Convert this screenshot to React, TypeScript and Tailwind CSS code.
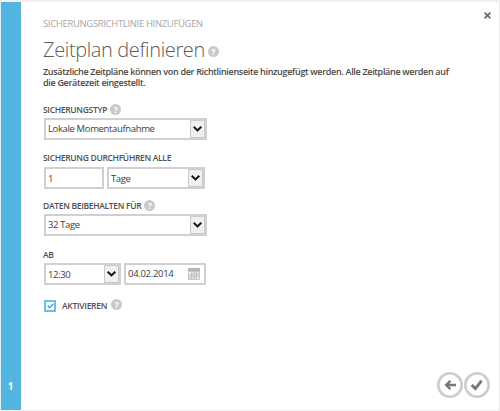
import type { ReactNode } from "react";

function Help({ className = "" }: { className?: string }) {
  return (
    <span
      className={`flex size-[11px] shrink-0 items-center justify-center rounded-full bg-[#c9c9c9] text-[9px] leading-none font-bold tracking-normal text-white ${className}`}
    >
      ?
    </span>
  );
}

function Label({ children, help }: { children: ReactNode; help?: boolean }) {
  return (
    <div className="flex h-[12px] items-center gap-[3px] text-[8.5px] font-semibold tracking-[-0.31px] whitespace-nowrap text-[#505050]">
      {children}
      {help && <Help className="mb-px" />}
    </div>
  );
}

function Select({ value, width, textClass = "" }: { value: string; width: string; textClass?: string }) {
  return (
    <div className={`flex h-[22px] items-center justify-between border-2 border-[#d0d0d0] bg-white pl-[2px] text-[9.5px] text-[#3c3c3c] ${width}`}>
      <span className={`tracking-[-0.36px] whitespace-nowrap ${textClass}`}>{value}</span>
      <span className="flex h-[18px] w-[15px] items-center justify-center border border-[#cacaca] bg-[#f0f0f0]">
        <svg width="9" height="6" viewBox="0 0 9 6" fill="none">
          <path d="M.7 .8 4.5 4.4 8.3 .8" stroke="#111" strokeWidth="2" />
        </svg>
      </span>
    </div>
  );
}

function CalendarIcon() {
  return (
    <svg width="12" height="12" viewBox="0 0 12 12">
      <path d="M0 0h12v12H0z" fill="#c8c8c8" />
      <path d="M0 0h12v3H0z" fill="#b6b6b6" />
      <path d="M4 4h2v2H4zM7 4h1v2H7zM9 4h2v2H9zM1 7h2v1H1zM4 7h2v1H4zM7 7h1v1H7zM9 7h2v1H9zM1 9h2v2H1zM4 9h2v2H4zM7 9h1v2H7z" fill="#dedede" />
      <path d="M1 4h2v2H1zM9 9h2v2H9z" fill="#f6f6f6" />
    </svg>
  );
}

export default function App() {
  return (
    <div className="flex h-[411px] w-[500px] overflow-hidden border-t-2 border-r border-b border-l border-t-[#f1f1f1] border-r-[#e9e9e9] border-b-[#f0f0f0] border-l-[#e4eef3] bg-white font-['Open_Sans','Noto_Sans',sans-serif]">
      <aside className="flex w-[20px] shrink-0 items-end justify-center bg-[#52b5e0] pr-px pb-[18px]">
        <span className="text-[10px] leading-[12px] font-bold text-white">1</span>
      </aside>
      <main className="relative flex grow flex-col pt-[15px] pl-[22px]">
        <button className="absolute top-[10px] right-[8px]" aria-label="Schließen">
          <svg width="7" height="7" viewBox="0 0 7 7">
            <path d="M.6 .6l5.8 5.8M6.4 .6L.6 6.4" stroke="#666" strokeWidth="1.6" />
          </svg>
        </button>
        <div className="h-[14px] text-[9.5px] leading-[14px] tracking-[-0.34px] whitespace-nowrap text-[#a8a8a8]">SICHERUNGSRICHTLINIE HINZUFÜGEN</div>
        <div className="mt-[4px] flex h-[30px] items-center gap-[3px] whitespace-nowrap text-[#5c5c5c]">
          <h1 className="text-[20px] leading-[30px] font-light tracking-[-0.38px]">Zeitplan definieren</h1>
          <Help className="mt-[3px]" />
        </div>
        <p className="mt-px text-[9px] leading-[11px] font-semibold tracking-[-0.315px] whitespace-nowrap text-[#484848]">
          Zusätzliche Zeitpläne können von der Richtlinienseite hinzugefügt werden. Alle Zeitpläne werden auf
          <br />
          die Gerätezeit eingestellt.
        </p>
        <div className="mt-[16px]">
          <Label help>SICHERUNGSTYP</Label>
          <div className="mt-[2px] ml-px">
            <Select value="Lokale Momentaufnahme" width="w-[163px]" />
          </div>
        </div>
        <div className="mt-[12px]">
          <Label>SICHERUNG DURCHFÜHREN ALLE</Label>
          <div className="mt-[3px] ml-px flex gap-[3px]">
            <div className="flex h-[22px] w-[60px] items-center border-2 border-[#d0d0d0] pt-[2px] pl-[2px] text-[9.5px] text-[#3c3c3c]">1</div>
            <Select value="Tage" width="w-[98px]" textClass="mt-[2px]" />
          </div>
        </div>
        <div className="mt-[11px]">
          <Label help>DATEN BEIBEHALTEN FÜR</Label>
          <div className="mt-[2px] ml-px">
            <Select value="32 Tage" width="w-[163px]" />
          </div>
        </div>
        <div className="mt-[13px]">
          <Label>AB</Label>
          <div className="mt-[2px] ml-px flex gap-[3px]">
            <Select value="12:30" width="w-[77px]" textClass="mt-[3px]" />
            <div className="flex h-[22px] w-[82px] items-center justify-between border-2 border-[#d0d0d0] pr-[4px] pl-[2px] text-[9.5px] tracking-[-0.3px] text-[#3c3c3c]">
              04.02.2014
              <CalendarIcon />
            </div>
          </div>
        </div>
        <div className="mt-[13px] ml-px flex h-[16px] items-center text-[8.5px] font-semibold tracking-[-0.28px] text-[#505050]">
          <span className="flex size-[12px] items-center justify-center border-2 border-[#74bce0] bg-[#f4fafd]">
            <svg width="7" height="6" viewBox="0 0 7 6" fill="none">
              <path d="M.7 2.8 2.6 4.7 6.3 .8" stroke="#348abc" strokeWidth="1.2" />
            </svg>
          </span>
          <span className="ml-[6px]">AKTIVIEREN</span>
          <Help className="mb-[4px] ml-[4px]" />
        </div>
        <div className="mt-auto mr-[9px] mb-[12px] flex justify-end gap-[1px]">
          <svg width="26" height="26" viewBox="0 0 26 26" fill="none">
            <circle cx="13" cy="13" r="11.7" stroke="#cdcdcd" strokeWidth="2.6" />
            <path d="M19 13H9.5M13.4 8.8 9.2 13l4.2 4.2" stroke="#777" strokeWidth="2.4" />
          </svg>
          <svg width="26" height="26" viewBox="0 0 26 26" fill="none">
            <circle cx="13" cy="13" r="11.7" stroke="#cdcdcd" strokeWidth="2.6" />
            <path d="M7.7 13 11.4 16.6 17.6 8.6" stroke="#777" strokeWidth="3" />
          </svg>
        </div>
      </main>
    </div>
  );
}
